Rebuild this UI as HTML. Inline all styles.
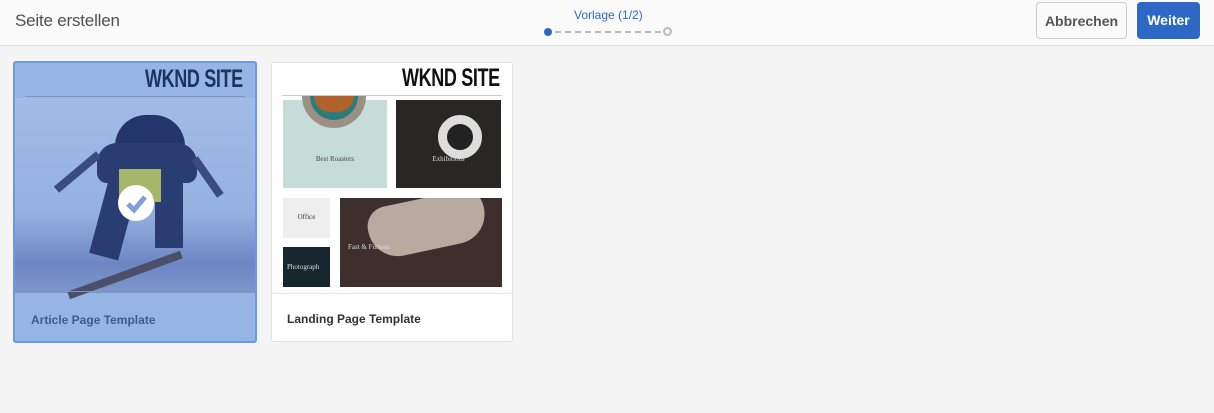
<!DOCTYPE html>
<html><head><style>
body{margin:0;width:1214px;height:413px;background:#f4f4f4;font-family:"Liberation Sans",sans-serif;overflow:hidden;position:relative}
.hdr{position:absolute;left:0;top:0;width:1214px;height:45px;background:#fafafa;border-bottom:1px solid #e1e1e1}
.t{position:absolute;left:15px;top:11px;font-size:17px;color:#505050;letter-spacing:-0.2px}
.v{position:absolute;left:574px;top:8px;font-size:12px;color:#2d68c4}
.btn{position:absolute;top:2px;height:37px;border-radius:4px;font-weight:bold;font-size:14px;line-height:37px;text-align:center;box-sizing:border-box}
.card{position:absolute;box-sizing:border-box;border-radius:3px;overflow:hidden}
.wk{position:absolute;font-family:"Liberation Sans Narrow","Liberation Sans",sans-serif;font-weight:bold;font-size:25px;letter-spacing:-0.5px;transform:scaleX(0.72);transform-origin:right}
.lbl{position:absolute;left:16px;top:250px;font-size:12px;font-weight:bold}
</style></head><body>
<div class="hdr">
<div class="t">Seite erstellen</div>
<div class="v">Vorlage (1/2)</div>
<div style="position:absolute;left:544px;top:28px;width:8px;height:8px;border-radius:50%;background:#2d68c4"></div>
<div style="position:absolute;left:555px;top:31px;width:106px;border-top:2px dashed #bbb"></div>
<div style="position:absolute;left:663px;top:27px;width:5px;height:5px;border-radius:50%;border:2px solid #bbb"></div>
<div class="btn" style="left:1036px;width:91px;border:1px solid #ccc;background:#fafafa;color:#555">Abbrechen</div>
<div class="btn" style="left:1137px;width:63px;background:#2d68c4;color:#fff">Weiter</div>
</div>

<div class="card" style="left:13px;top:61px;width:244px;height:282px;border:2px solid #6d98e8;background:#97b5e4">
 <div class="wk" style="right:12px;top:2px;color:#1c3560">WKND SITE</div>
 <div style="position:absolute;left:10px;right:10px;top:33px;border-top:1px solid #7c95c0"></div>
 <div style="position:absolute;left:0;right:0;top:35px;height:195px;background:linear-gradient(180deg,#a2bce6 0%,#93b0e0 60%,#6c86c3 85%,#7d97cc 100%)"></div>
 <div style="position:absolute;left:100px;top:52px;width:70px;height:40px;background:#23356b;border-radius:35px 35px 10px 10px"></div>
 <div style="position:absolute;left:82px;top:80px;width:100px;height:40px;background:#2a3d72;border-radius:20px 20px 10px 10px"></div>
 <div style="position:absolute;left:84px;top:115px;width:30px;height:80px;background:#2a3d72;transform:rotate(15deg)"></div>
 <div style="position:absolute;left:140px;top:115px;width:28px;height:70px;background:#2a3d72"></div>
 <div style="position:absolute;left:35px;top:105px;width:55px;height:8px;background:#3a4c7d;transform:rotate(-40deg)"></div>
 <div style="position:absolute;left:170px;top:110px;width:45px;height:8px;background:#3a4c7d;transform:rotate(55deg)"></div>
 <div style="position:absolute;left:104px;top:106px;width:42px;height:33px;background:#a5b66b"></div>
 <div style="position:absolute;left:50px;top:208px;width:120px;height:8px;background:#4c4f6a;transform:rotate(-20deg)"></div>
 <div style="position:absolute;left:0;right:0;top:228px;height:1px;background:#7a94c8"></div>
 <div style="position:absolute;left:103px;top:122px;width:36px;height:36px;border-radius:50%;background:#fff"></div>
 <svg style="position:absolute;left:103px;top:122px" width="36" height="36"><path d="M10 19 L16 25 L27 12" stroke="#7fa0d8" stroke-width="5" fill="none"/></svg>
 <div class="lbl" style="color:#415b8a">Article Page Template</div>
</div>

<div class="card" style="left:271px;top:62px;width:242px;height:280px;border:1px solid #e2e2e2;background:#fff">
 <div class="wk" style="right:12px;top:1px;color:#111">WKND SITE</div>
 <div style="position:absolute;left:10px;right:10px;top:32px;border-top:1px solid #ccc"></div>
 <div style="position:absolute;left:11px;top:37px;width:104px;height:88px;background:#c5dcd8"></div>
 <div style="position:absolute;left:30px;top:33px;width:64px;height:32px;border-radius:0 0 32px 32px;background:#9c8f83"></div>
 <div style="position:absolute;left:38px;top:33px;width:48px;height:24px;border-radius:0 0 24px 24px;background:#2b7c7c"></div>
 <div style="position:absolute;left:42px;top:33px;width:40px;height:16px;border-radius:0 0 20px 20px;background:#b0622c"></div>
 <div style="position:absolute;left:11px;top:92px;width:104px;font-size:7px;text-align:center;color:#444;font-family:'Liberation Serif',serif">Best Roasters</div>
 <div style="position:absolute;left:124px;top:37px;width:105px;height:88px;background:#2a2626"></div>
 <div style="position:absolute;left:166px;top:52px;width:26px;height:26px;border-radius:50%;border:9px solid #ddd;background:#222"></div>
 <div style="position:absolute;left:124px;top:92px;width:105px;font-size:7px;text-align:center;color:#ddd;font-family:'Liberation Serif',serif">Exhibitions</div>
 <div style="position:absolute;left:11px;top:135px;width:47px;height:40px;background:#eee"></div>
 <div style="position:absolute;left:11px;top:150px;width:47px;font-size:7px;text-align:center;color:#333;font-family:'Liberation Serif',serif">Office</div>
 <div style="position:absolute;left:11px;top:184px;width:47px;height:40px;background:#16272d"></div>
 <div style="position:absolute;left:15px;top:200px;font-size:7px;color:#ddd;font-family:'Liberation Serif',serif">Photograph</div>
 <div style="position:absolute;left:68px;top:135px;width:162px;height:89px;background:#3d2f2e;overflow:hidden">
  <div style="position:absolute;left:28px;top:0;width:118px;height:52px;border-radius:20px 20px 30px 30px;background:#b8aa9e;transform:rotate(-12deg)"></div>
 </div>
 <div style="position:absolute;left:76px;top:180px;font-size:7px;color:#ddd;font-family:'Liberation Serif',serif">Fast &amp; Furious</div>
 <div style="position:absolute;left:0;right:0;top:230px;border-top:1px solid #e5e5e5"></div>
 <div class="lbl" style="color:#333;left:15px;top:249px">Landing Page Template</div>
</div>
</body></html>
